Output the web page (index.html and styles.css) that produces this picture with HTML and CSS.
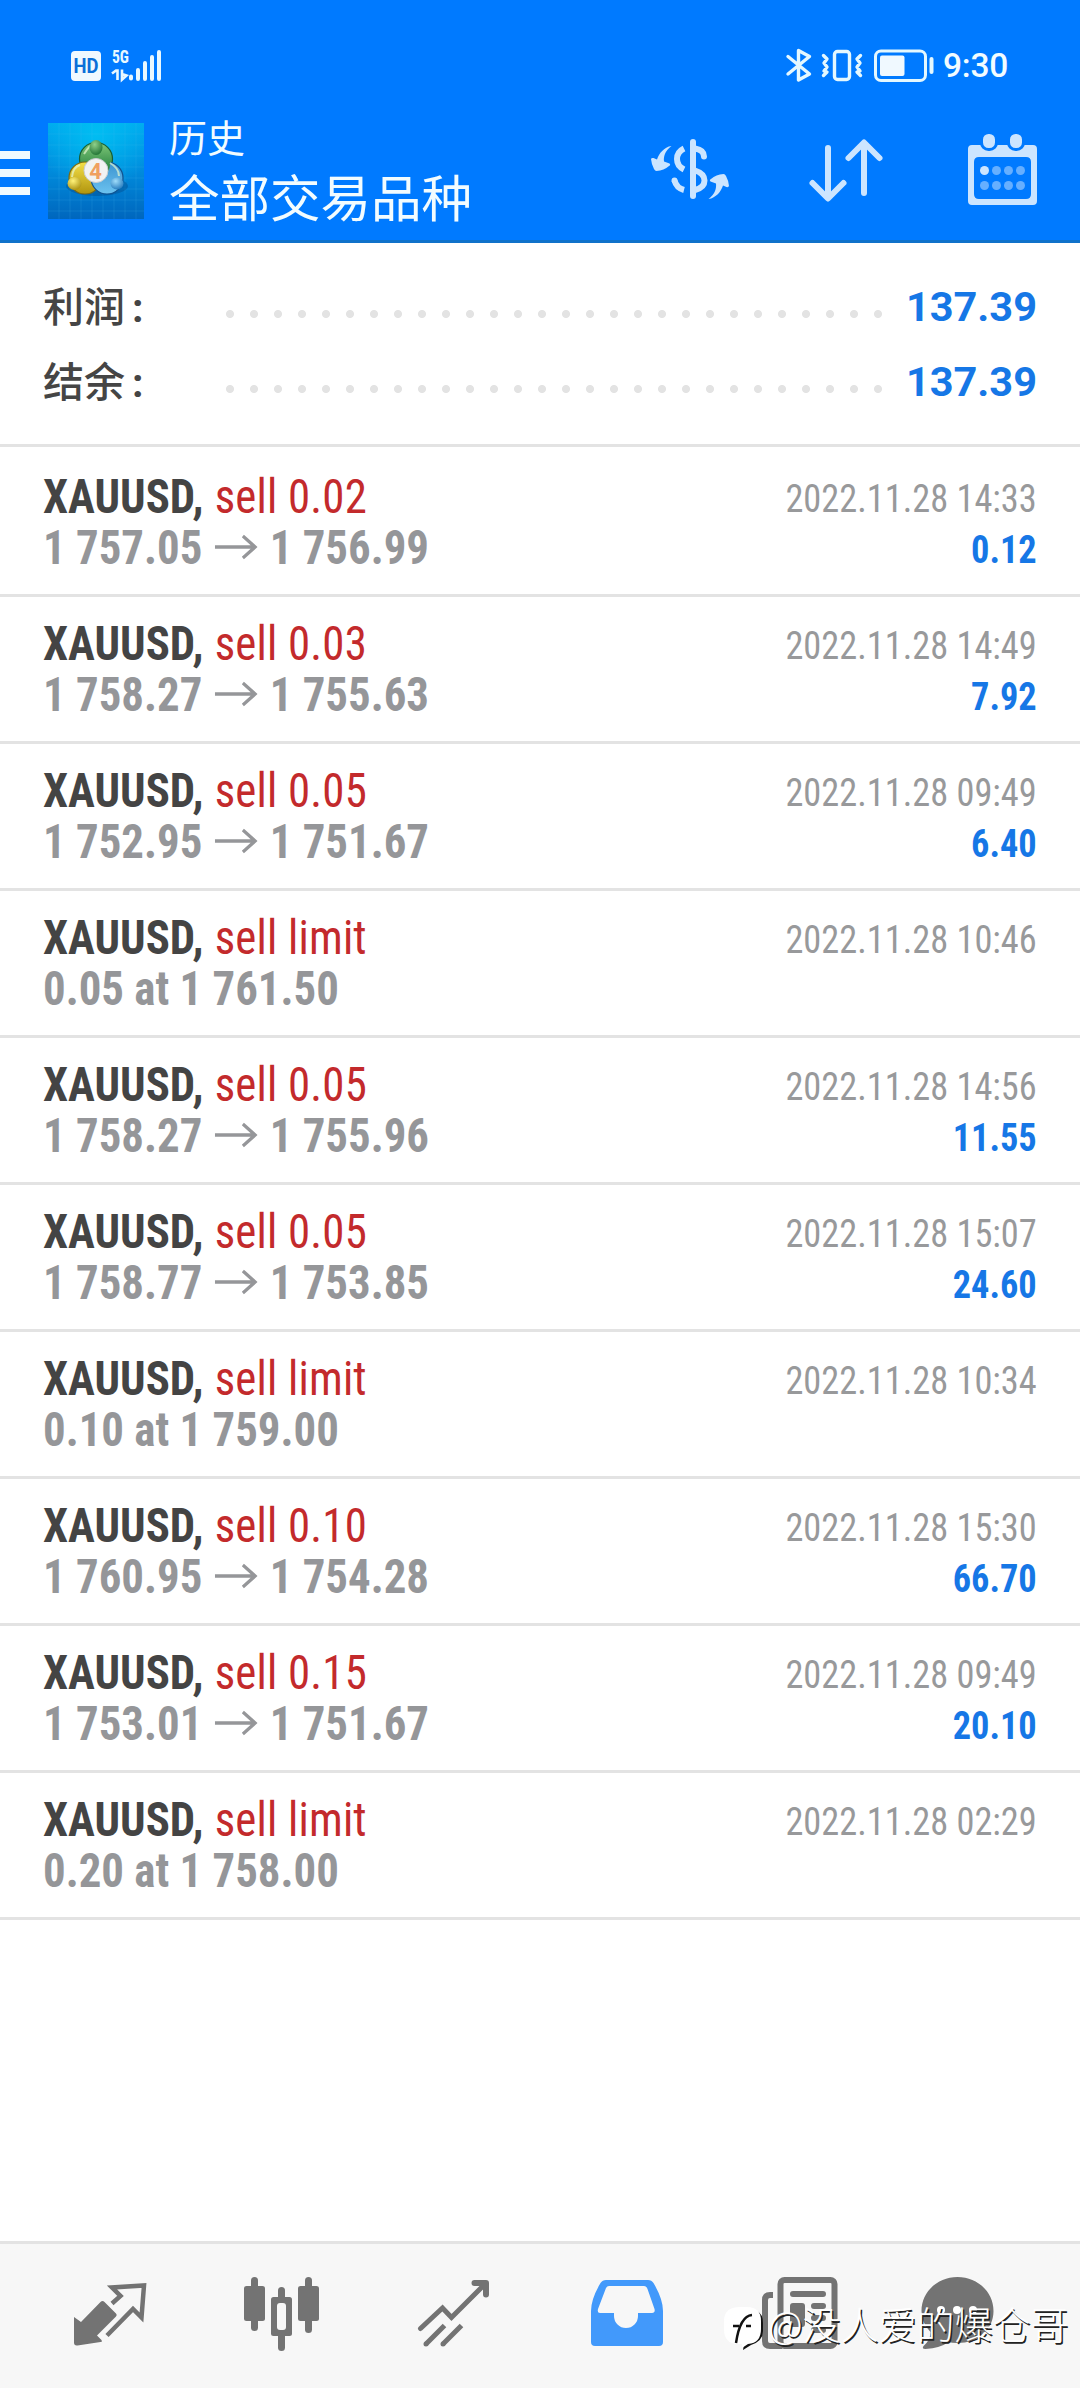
FILE: index.html
```html
<!DOCTYPE html>
<html lang="zh-CN">
<head>
<meta charset="utf-8">
<title>历史</title>
<link rel="stylesheet" href="styles.css">
</head>
<body>
<div class="screen">
  <header class="header">
    <div class="status">
      <svg class="status-left" viewBox="66 46 102 40" width="102" height="40">
        <rect x="71" y="51" width="30" height="30" rx="4" fill="#f0f9ff"/>
        <text x="86" y="73" class="hd" textLength="25" lengthAdjust="spacingAndGlyphs" text-anchor="middle">HD</text>
        <text x="112" y="63" class="net" textLength="17" lengthAdjust="spacingAndGlyphs">5G</text>
        <path d="M112 73.500l4-3h1.500v9.500M122 69.500v10l4.500-4-4.500-1.500" fill="none" stroke="#e8f8ff" stroke-width="2.600"/>
        <path d="M131 76.500v2M138 70v9M145 63v16M152 57v22M159 52v27" stroke="#e8f8ff" stroke-width="4" stroke-linecap="round"/>
      </svg>
      <div class="status-right">
        <svg viewBox="782 44 156 42" width="156" height="42" fill="none" stroke="#e4f8ff" stroke-width="3.400" stroke-linecap="round" stroke-linejoin="round">
          <path d="M788 56.500l21.500 17.500-11 6V50.500l11 6-21.500 17.500"/>
          <rect x="834.500" y="51.500" width="15" height="28" rx="3"/>
          <path d="M823.500 55.500l3.500 3.500-3 4 3 4-3 4 3 1-3.500 3.500M860.500 55.500l-3.500 3.500 3 4-3 4 3 4-3 1 3.500 3.500"/>
          <rect x="875.500" y="51" width="50" height="29.500" rx="5.500" stroke-width="3"/>
          <rect x="880" y="55.500" width="24.500" height="20.500" rx="2" fill="#f0f9ff" stroke="none"/>
          <path d="M931.500 59v13" stroke-width="4"/>
        </svg>
        <span class="clock">9:30</span>
      </div>
    </div>
    <div class="bar">
      <svg class="menu" viewBox="0 151 30 44" width="30" height="44"><path d="M0 151h30v8H0zM0 169h30v8H0zM0 187h30v8H0z" fill="#f0faff"/></svg>
      <svg class="logo" viewBox="0 0 96 96" width="96" height="96">
        <defs>
          <linearGradient id="bg" x1="0" y1="0" x2="0" y2="1"><stop offset="0" stop-color="#00a9ee"/><stop offset=".5" stop-color="#008bdc"/><stop offset="1" stop-color="#0066bd"/></linearGradient>
          <radialGradient id="glow" cx=".5" cy=".12" r=".6"><stop offset="0" stop-color="#00c4f4" stop-opacity=".8"/><stop offset="1" stop-color="#00c4f4" stop-opacity="0"/></radialGradient>
          <linearGradient id="green" x1="0" y1="0" x2="0" y2="1"><stop offset="0" stop-color="#7cc576"/><stop offset="1" stop-color="#1d7a3a"/></linearGradient>
          <linearGradient id="yellow" x1="0" y1="0" x2="0" y2="1"><stop offset="0" stop-color="#f4df48"/><stop offset="1" stop-color="#b0940e"/></linearGradient>
          <linearGradient id="blue" x1="0" y1="0" x2="0" y2="1"><stop offset="0" stop-color="#3c93cf"/><stop offset="1" stop-color="#6cc3f0"/></linearGradient>
          <radialGradient id="gball" cx=".4" cy=".3" r=".8"><stop offset="0" stop-color="#8fd08a"/><stop offset="1" stop-color="#166a2c"/></radialGradient>
          <radialGradient id="yball" cx=".4" cy=".3" r=".8"><stop offset="0" stop-color="#fff27a"/><stop offset="1" stop-color="#a58a08"/></radialGradient>
          <radialGradient id="bball" cx=".4" cy=".3" r=".8"><stop offset="0" stop-color="#9fdcfa"/><stop offset="1" stop-color="#1a72b8"/></radialGradient>
        </defs>
        <rect width="96" height="96" fill="url(#bg)"/>
        <rect width="96" height="96" fill="url(#glow)"/>
        <path d="M11 0v96M22 0v96M33 0v96M44 0v96M55 0v96M66 0v96M77 0v96M88 0v96M0 11h96M0 22h96M0 33h96M0 44h96M0 55h96M0 66h96M0 77h96M0 88h96" stroke="#4cc0f0" stroke-opacity=".16"/>
        <ellipse cx="49" cy="63" rx="31" ry="10" fill="#023f7c" opacity=".35"/>
        <circle cx="48" cy="36" r="16.500" fill="url(#green)" stroke="#175e33" stroke-width="1.200"/>
        <circle cx="37" cy="55" r="16" fill="url(#yellow)" stroke="#7a6a14" stroke-width="1.200"/>
        <circle cx="59" cy="55" r="16" fill="url(#blue)" stroke="#11528f" stroke-width="1.200"/>
        <path d="M50 21a15.500 15.500 0 0 1 12 21q0 5-4 8l-10-9z" fill="url(#green)"/>
        <path d="M36 31q6-10 11-10M24 54q1-10 8-12M62 40q9 5 9 13" fill="none" stroke="#e6f6d0" stroke-opacity=".7" stroke-width="2"/>
        <ellipse cx="48" cy="24.500" rx="6.500" ry="7.500" fill="url(#gball)"/>
        <ellipse cx="26.500" cy="60.500" rx="7" ry="6.500" fill="url(#yball)"/>
        <ellipse cx="69" cy="60.500" rx="6.500" ry="6" fill="url(#bball)"/>
        <circle cx="48" cy="47.500" r="12" fill="#f2f2f2" stroke="#c8ccd0"/>
        <text x="47.500" y="55.500" text-anchor="middle" class="four">4</text>
      </svg>
      <div class="titles">
        <div class="subtitle">历史</div>
        <div class="title">全部交易品种</div>
      </div>
      <svg class="actions" viewBox="640 130 400 80" width="400" height="80">
        <g fill="none" stroke="#cce5ff" stroke-width="6">
          <path d="M693 142v54" stroke-linecap="round"/>
          <path d="M684 148.500q-7 3.500-7 10.500t7 10.500"/>
          <path d="M695 148.500q9 1.500 9 8M674.500 180.500v0" stroke-linecap="round"/>
          <path d="M695 170.500q9.500 3 9.500 10t-9.500 9.500M674.500 180.500q2 7.500 9.500 9.500"/>
        </g>
        <g fill="#cce5ff">
          <path d="M671.500 146c-7 5-8 11-7.500 15.500l5.500 2q1.500 1.500-.5 2.500-5 4.500-12.500 5-1.500 0-2.500-2-2.500-4.500-3-10 .5-1.500 2.500-1l3.500 1.500c2-6 7-12.500 14.500-13.500z"/>
          <path d="M671.500 146c-7 5-8 11-7.500 15.500l5.500 2q1.500 1.500-.5 2.500-5 4.500-12.500 5-1.500 0-2.500-2-2.500-4.500-3-10 .5-1.500 2.500-1l3.500 1.500c2-6 7-12.500 14.500-13.500z" transform="rotate(180 690 172.500)"/>
        </g>
        <path d="M828 148v50M812.500 183l15.500 15.500 15.500-15.500M864 193v-50M848.500 158l15.500-15.500 15.500 15.500" fill="none" stroke="#cce5ff" stroke-width="6" stroke-linecap="round" stroke-linejoin="round"/>
        <path fill-rule="evenodd" d="M972 145h61q4 0 4 4v52q0 4-4 4h-61q-4 0-4-4v-52q0-4 4-4zM979 157q-5 0-5 5v32q0 5 5 5h47q5 0 5-5v-32q0-5-5-5z" fill="#cce5ff"/>
        <rect x="981.500" y="132.500" width="15" height="17" rx="7" fill="#cce5ff" stroke="#007aff" stroke-width="3"/>
        <rect x="1008.500" y="132.500" width="15" height="17" rx="7" fill="#cce5ff" stroke="#007aff" stroke-width="3"/>
        <circle cx="984.500" cy="170.500" r="4.500" fill="#cce5ff"/>
        <g fill="#66afff"><circle cx="996.500" cy="170.500" r="4.500"/><circle cx="1008.500" cy="170.500" r="4.500"/><circle cx="1020.500" cy="170.500" r="4.500"/><circle cx="984.500" cy="185.500" r="4.500"/><circle cx="996.500" cy="185.500" r="4.500"/><circle cx="1008.500" cy="185.500" r="4.500"/><circle cx="1020.500" cy="185.500" r="4.500"/></g>
      </svg>
    </div>
  </header>

  <section class="summary">
    <div class="sum-row"><span class="label">利润<b>:</b></span><i class="dots"></i><span class="total">137.39</span></div>
    <div class="sum-row"><span class="label">结余<b>:</b></span><i class="dots"></i><span class="total">137.39</span></div>
  </section>

  <main class="list" id="list"></main>

  <nav class="nav">
    <svg viewBox="24 2244 172 144"><path d="M74 2317l7 5 19.500-20q2-2 4 0l11.500 11.500q1.500 1.500 0 3l-19 19 4.500 4.500q1 2-1 2l-23 3.500q-3.500.5-3.500-3z" fill="#737373"/><path d="M112 2303.500l8.500-7.500-8.500-8.500 32-2-2.500 32-8.500-8.500-26 26.500" fill="none" stroke="#737373" stroke-width="4.500"/></svg>
    <svg viewBox="196 2244 172 144" fill="#737373"><rect x="244" y="2286" width="21" height="35" rx="2.500"/><rect x="251" y="2277" width="7" height="54" rx="3.500"/><rect x="298" y="2286" width="21" height="35" rx="2.500"/><rect x="305" y="2277" width="7" height="56" rx="3.500"/><rect x="278" y="2287" width="7" height="64" rx="3.500"/><rect x="271" y="2297" width="21" height="39" rx="2.500"/><rect x="277" y="2303" width="9" height="27" rx="3" fill="#f7f7f7"/></svg>
    <svg viewBox="368 2244 172 144" fill="none" stroke="#737373" stroke-width="5"><path d="M420.500 2328.500l22-20.500 9 9.500 34-34" stroke-linecap="round"/><path d="M474.500 2283h11.500v11.500" stroke-width="6" stroke-linecap="round" stroke-linejoin="round"/><path d="M426 2344l18.500-18.500M443 2344l18.500-18.500"/><path d="M426 2344v0M443 2344v0" stroke-linecap="round"/></svg>
    <svg viewBox="540 2244 172 144"><path fill-rule="evenodd" d="M606 2280h42q3.500 0 5.500 3 9.500 16 9.500 28v31q0 4-4 4h-64q-4 0-4-4v-31q0-12 9.500-28 2-3 5.500-3zM609 2286q-2 0-3 2l-8 21q-1 4 2 4h14v3a12 12 0 0 0 24 0v-3h14q3.500 0 2.500-4l-7-20q-1-3-3.500-3z" fill="#4299fb"/></svg>
    <svg viewBox="712 2244 172 144"><path d="M773 2295h-3q-5 0-5 5v41q0 5 5 5h12" fill="none" stroke="#737373" stroke-width="6"/><rect x="780.500" y="2280" width="54" height="66" rx="4" fill="#f7f7f7" stroke="#737373" stroke-width="6"/><path d="M793 2294h30M814 2306h9M814 2318h9M814 2330h9" stroke="#737373" stroke-width="6" stroke-linecap="round"/><rect x="790" y="2303" width="15" height="24" rx="3" fill="#737373"/></svg>
    <svg viewBox="884 2244 172 144"><path d="M957.500 2277c20 0 36 15 36 34s-16 32-36 32q-6 0-9-1-8 6-23 7-4 0-2-3 7-6 7-14-9-9-9-21c0-19 16-34 36-34z" fill="#737373"/><g fill="#fff"><circle cx="941" cy="2310" r="4"/><circle cx="957" cy="2310" r="4"/><circle cx="973" cy="2310" r="4"/></g></svg>
    <div class="watermark">
      <svg viewBox="722 2304 46 50" width="46" height="50"><path d="M757 2312q6 3 6 12v8q0 10-12 14l-8 5 1-6z" fill="#111"/><path d="M740 2308h7q14 0 14 14v8q0 14-13 15l-6 4v-4h-4q-14 0-14-15v-8q0-14 16-14z" fill="#fff"/><path d="M733 2327h6m7 0h5M736 2344q4-27 16-28" fill="none" stroke="#111" stroke-width="2.500"/></svg>
      <span>@没人爱的爆仓哥</span>
    </div>
  </nav>
</div>
<script src="app.js"></script>
</body>
</html>
```
FILE: styles.css
```css
* { box-sizing: border-box; }
body { margin: 0; background: #fff; font-family: Roboto, "Noto Sans CJK SC", sans-serif; }
.screen { width: 1080px; height: 2388px; display: flex; flex-direction: column; overflow: hidden; }

.header { height: 243px; background: #007aff; border-bottom: 3px solid #1072ca; color: #f2fcff; }
.status { height: 108px; padding: 44px 70px 0 66px; display: flex; justify-content: space-between; align-items: flex-start; }
.status-left { margin-top: 2px; }
.status-right { display: flex; gap: 5px; }
.clock { font-size: 33.500px; font-weight: 500; line-height: 44px; width: 67px; white-space: nowrap; letter-spacing: -.2px; }
.hd { font: 700 21px Roboto, sans-serif; fill: #0a6fd8; }
.net { font: 700 18px "Roboto Condensed", sans-serif; fill: #e8f8ff; }
.four { font: 700 22px Roboto, sans-serif; fill: #f0a060; }
.bar { display: flex; align-items: flex-start; height: 132px; }
.menu { margin-top: 43px; }
.logo { margin: 15px 0 0 18px; }
.titles { margin: 8px 0 0 25px; flex: 1; white-space: nowrap; }
.subtitle { font-size: 38px; line-height: 46px; }
.title { font-size: 50.500px; line-height: 60px; margin-top: 8px; }
.actions { margin: 22px 40px 0 0; }

.summary { height: 204px; padding: 27px 43px 0; border-bottom: 3px solid #e3e3e3; }
.sum-row { height: 75px; display: flex; align-items: center; color: #454545; }
.label { font-size: 41px; font-weight: 500; width: 183px; line-height: 60px; white-space: nowrap; }
.label b { font-weight: 700; margin-left: 7px; }
.dots { width: 672px; height: 10px; margin: 12px 0 0 -8px; background: radial-gradient(circle at 12px 5px, #e3e3e3 3.600px, transparent 4.400px) 0 0 / 24px 10px repeat-x; }
.total { margin: 0 0 3px auto; font-size: 41.500px; font-weight: 700; color: #1677e6; }

.list { padding-top: 3px; flex: 1; }
.trade { height: 147px; border-bottom: 3px solid #e3e3e3; padding: 21px 43px 0; display: flex; justify-content: space-between; font-family: "Roboto Condensed", Roboto, sans-serif; white-space: nowrap; line-height: 51px; }
.left { font-size: 48px; transform: scaleX(.934); transform-origin: 0 0; }
.symbol { font-weight: 700; color: #444; }
.side { color: #c32a2c; margin-left: 1px; letter-spacing: .2px; }
.price { font-weight: 700; color: #959699; }
.arrow { margin: 0 2px; vertical-align: 4px; }
.right { padding-top: 3px; text-align: right; font-size: 39.300px; transform: scaleX(.925); transform-origin: 100% 0; }
.time { color: #98999b; }
.profit { font-weight: 700; color: #1677e6; }

.nav { position: relative; height: 147px; background: #f7f7f7; border-top: 3px solid #e3e3e3; padding: 0 24px; display: grid; grid-template-columns: repeat(6, 172px); }
.nav > svg { width: 172px; height: 144px; }
.watermark { position: absolute; left: 722px; top: 59px; display: flex; color: #fff; font-family: "Noto Sans CJK SC", sans-serif; font-weight: 300; font-size: 38px; line-height: 40px; white-space: nowrap; text-shadow: 1.500px 1.500px .5px #222; }
```
FILE: app.js
```js
const trades = [
  ["sell 0.02", "1 757.05", "1 756.99", "2022.11.28 14:33", "0.12"],
  ["sell 0.03", "1 758.27", "1 755.63", "2022.11.28 14:49", "7.92"],
  ["sell 0.05", "1 752.95", "1 751.67", "2022.11.28 09:49", "6.40"],
  ["sell limit", "0.05 at 1 761.50", "", "2022.11.28 10:46", ""],
  ["sell 0.05", "1 758.27", "1 755.96", "2022.11.28 14:56", "11.55"],
  ["sell 0.05", "1 758.77", "1 753.85", "2022.11.28 15:07", "24.60"],
  ["sell limit", "0.10 at 1 759.00", "", "2022.11.28 10:34", ""],
  ["sell 0.10", "1 760.95", "1 754.28", "2022.11.28 15:30", "66.70"],
  ["sell 0.15", "1 753.01", "1 751.67", "2022.11.28 09:49", "20.10"],
  ["sell limit", "0.20 at 1 758.00", "", "2022.11.28 02:29", ""]
];
const arrow = '<svg class="arrow" viewBox="0 0 46 26" width="46" height="26"><path d="M0 13h43M30 2l13 11-13 11" fill="none" stroke="#959699" stroke-width="3.500"/></svg>';
document.getElementById("list").innerHTML = trades.map(([side, open, close, time, profit]) => `
  <div class="trade">
    <div class="left">
      <div><span class="symbol">XAUUSD,</span> <span class="side">${side}</span></div>
      <div class="price">${open}${close ? ` ${arrow} ${close}` : ""}</div>
    </div>
    <div class="right">
      <div class="time">${time}</div>
      <div class="profit">${profit}</div>
    </div>
  </div>`).join("");
```
